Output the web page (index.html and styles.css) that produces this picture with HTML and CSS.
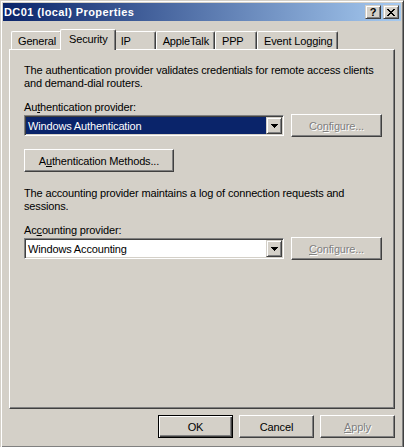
FILE: index.html
```html
<!DOCTYPE html>
<html>
<head>
<meta charset="utf-8">
<link rel="stylesheet" href="styles.css">
</head>
<body>
<div class="window">
  <div class="titlebar">
    <span class="title">DC01 (local) Properties</span>
    <div class="caption-buttons">
      <div class="cap-btn"><span class="q">?</span></div>
      <div class="cap-btn">
        <svg width="8" height="7" viewBox="0 0 8 7" shape-rendering="crispEdges">
          <path d="M0 0h2v1h-2zM6 0h2v1h-2zM1 1h2v1h-2zM5 1h2v1h-2zM2 2h4v1h-4zM3 3h2v1h-2zM2 4h4v1h-4zM1 5h2v1h-2zM5 5h2v1h-2zM0 6h2v1h-2zM6 6h2v1h-2z" fill="#000"/>
        </svg>
      </div>
    </div>
  </div>
  <div class="body">
    <div class="tabs">
      <div class="tab">General</div>
      <div class="tab active">Security</div>
      <div class="tab">IP</div>
      <div class="tab">AppleTalk</div>
      <div class="tab">PPP</div>
      <div class="tab">Event Logging</div>
    </div>
    <div class="panel">
      <p class="desc">The authentication provider validates credentials for remote access clients and demand-dial routers.</p>
      <div class="label">Au<u>t</u>hentication provider:</div>
      <div class="row">
        <div class="combo">
          <div class="field selected">Windows Authentication</div>
          <div class="drop">
            <svg width="7" height="4" viewBox="0 0 7 4" shape-rendering="crispEdges"><path d="M0 0h7v1h-7zM1 1h5v1h-5zM2 2h3v1h-3zM3 3h1v1h-1z" fill="#000"/></svg>
          </div>
        </div>
        <div class="btn configure disabled">Co<u>n</u>figure...</div>
      </div>
      <div class="btn methods">A<u>u</u>thentication Methods...</div>
      <p class="desc second">The accounting provider maintains a log of connection requests and sessions.</p>
      <div class="label">Ac<u>c</u>ounting provider:</div>
      <div class="row">
        <div class="combo">
          <div class="field">Windows Accounting</div>
          <div class="drop">
            <svg width="7" height="4" viewBox="0 0 7 4" shape-rendering="crispEdges"><path d="M0 0h7v1h-7zM1 1h5v1h-5zM2 2h3v1h-3zM3 3h1v1h-1z" fill="#000"/></svg>
          </div>
        </div>
        <div class="btn configure disabled"><u>C</u>onfigure...</div>
      </div>
    </div>
    <div class="footer">
      <div class="btn default">OK</div>
      <div class="btn">Cancel</div>
      <div class="btn disabled"><u>A</u>pply</div>
    </div>
  </div>
</div>
</body>
</html>
```
FILE: styles.css
```css
html, body {
  margin: 0;
  padding: 0;
  background: #d4d0c8;
  overflow: hidden;
}

body {
  font-family: "Liberation Sans", Arial, sans-serif;
  font-size: 11px;
  letter-spacing: -0.15px;
  color: #000;
}

u {
  text-decoration: underline;
  text-underline-offset: 1px;
}

.window {
  box-sizing: border-box;
  width: 404px;
  height: 448px;
  border: 1px solid;
  border-color: #d4d0c8 #404040 #404040 #d4d0c8;
  box-shadow: inset 1px 1px #fff, inset -1px -1px #808080;
  padding: 2px;
  display: flex;
  flex-direction: column;
  background: #d4d0c8;
}

.titlebar {
  flex: none;
  height: 18px;
  display: flex;
  align-items: center;
  justify-content: space-between;
  padding: 0 2px 0 1px;
  background: linear-gradient(to right, #0a246a, #a6caf0);
}

.title {
  color: #fff;
  font-weight: bold;
  letter-spacing: 0.4px;
}

.caption-buttons {
  display: flex;
  gap: 2px;
}

.cap-btn {
  box-sizing: border-box;
  width: 16px;
  height: 14px;
  background: #d4d0c8;
  border: 1px solid;
  border-color: #d4d0c8 #404040 #404040 #d4d0c8;
  box-shadow: inset 1px 1px #fff, inset -1px -1px #808080;
  display: flex;
  align-items: center;
  justify-content: center;
}

.q {
  font-weight: bold;
  font-size: 11px;
  line-height: 11px;
  letter-spacing: 0;
}

.body {
  flex: 1;
  display: flex;
  flex-direction: column;
  padding: 0 6px;
}

.tabs {
  flex: none;
  display: flex;
  align-items: flex-end;
  height: 20px;
  margin-top: 8px;
  padding-left: 2px;
}

.tab {
  box-sizing: border-box;
  height: 18px;
  min-width: 42px;
  padding: 1px 5px 0 6px;
  border-left: 1px solid #fff;
  border-top: 1px solid #fff;
  border-right: 1px solid #404040;
  border-radius: 2px 2px 0 0;
  box-shadow: inset -1px 0 #808080;
  display: flex;
  align-items: center;
  white-space: nowrap;
  background: #d4d0c8;
}

.tab.active {
  height: 21px;
  margin: 0 -2px -1px;
  padding: 0 7px 2px 8px;
  position: relative;
  z-index: 1;
}

.panel {
  flex: 1;
  border: 1px solid;
  border-color: #fff #404040 #404040 #fff;
  box-shadow: inset -1px -1px #808080;
  padding: 14px 12px 0 14px;
}

.desc {
  margin: 0 -8px 0 0;
  line-height: 13px;
}

.desc.second {
  margin-top: 15px;
}

.label {
  margin-top: 11px;
  line-height: 13px;
}

.row {
  display: flex;
  align-items: center;
  gap: 7px;
}

.combo {
  flex: 1;
  box-sizing: border-box;
  height: 21px;
  border: 1px solid;
  border-color: #808080 #fff #fff #808080;
  box-shadow: inset 1px 1px #404040, inset -1px -1px #d4d0c8;
  background: #fff;
  padding: 1px;
  display: flex;
}

.field {
  flex: 1;
  display: flex;
  align-items: center;
  padding-left: 2px;
  white-space: nowrap;
}

.field.selected {
  background: #0a246a;
  color: #fff;
}

.drop {
  box-sizing: border-box;
  width: 16px;
  border: 1px solid;
  border-color: #d4d0c8 #404040 #404040 #d4d0c8;
  box-shadow: inset 1px 1px #fff, inset -1px -1px #808080;
  background: #d4d0c8;
  display: flex;
  align-items: center;
  justify-content: center;
}

.btn {
  box-sizing: border-box;
  height: 23px;
  display: flex;
  align-items: center;
  justify-content: center;
  border: 1px solid;
  border-color: #fff #404040 #404040 #fff;
  box-shadow: inset -1px -1px #808080;
  background: #d4d0c8;
  white-space: nowrap;
}

.btn.configure {
  width: 91px;
}

.btn.methods {
  width: 150px;
  margin-top: 12px;
}

.btn.disabled {
  color: #808080;
  text-shadow: 1px 1px #fff;
}

.btn.default {
  border-color: #000;
  box-shadow: inset 1px 1px #fff, inset -1px -1px #404040, inset -2px -2px #808080;
}

.footer {
  flex: none;
  display: flex;
  justify-content: flex-end;
  gap: 6px;
  padding: 6px 0 7px;
}

.footer .btn {
  width: 75px;
}
```
